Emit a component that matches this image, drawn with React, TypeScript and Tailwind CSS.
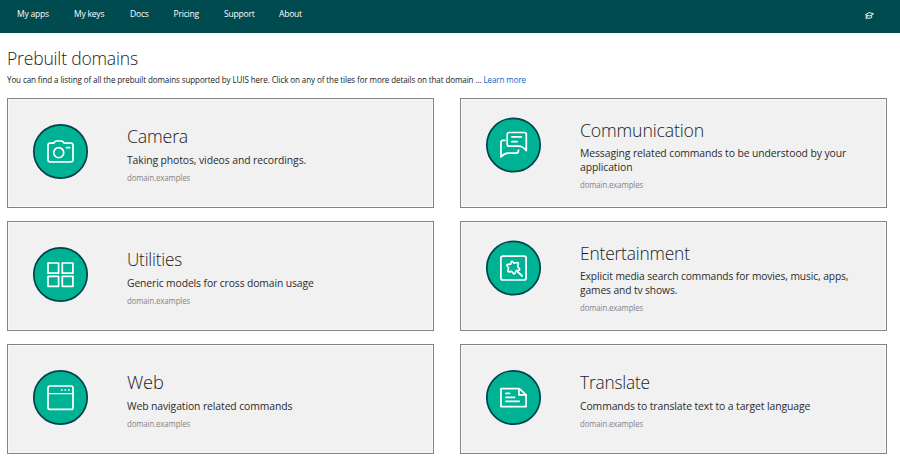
import type { ReactNode } from 'react';

const navItems = [
  { label: 'My apps', box: 'w-[57px]' },
  { label: 'My keys', box: 'w-[56px]' },
  { label: 'Docs', box: 'w-[43.5px]' },
  { label: 'Pricing', box: 'w-[50.5px]' },
  { label: 'Support', box: 'w-[55px]' },
  { label: 'About', box: 'w-[40px]' },
];

type Domain = {
  title: string;
  text: string;
  twoLines?: boolean;
  titleClass: string;
  descClass: string;
  icon: ReactNode;
};

const domains: Domain[] = [
  {
    title: 'Camera',
    text: 'Taking photos, videos and recordings.',
    titleClass: 'scale-x-[0.935]',
    descClass: 'scale-x-[0.943]',
    icon: (
      <>
        <path d="M17 19.2h3.6l2.2-2.2h6.2l2.2 2.2h6.6q2.2 0 2.2 2.2v14q0 2.4-2.2 2.4H17.2q-2.2 0-2.2-2.4v-14q0-2.2 2-2.2z" />
        <circle cx="25.7" cy="28.7" r="5" />
        <path d="M33.5 23.6h3.2" />
      </>
    ),
  },
  {
    title: 'Communication',
    text: 'Messaging related commands to be understood by your\napplication',
    twoLines: true,
    titleClass: 'scale-x-[0.935]',
    descClass: 'scale-x-[0.945]',
    icon: (
      <>
        <path d="M40.3 33.2V17q0-2-2-2H23.2q-2 0-2 2v9.7q0 2 2 2h9.5q4 0 7.6 4.5z" />
        <path d="M25.9 19.4h9.4M25.9 24.2h5.1" />
        <path d="M19 22.8h-1.8q-2.2 0-2.2 2v14.7q3.2-3.8 7-3.8h8q2.5 0 2.5-3" />
      </>
    ),
  },
  {
    title: 'Utilities',
    text: 'Generic models for cross domain usage',
    titleClass: 'scale-x-[0.9]',
    descClass: 'scale-x-[0.938]',
    icon: (
      <>
        <path d="M15 16h10.6v10.2H15zM29.3 16h10.6v10.2H29.3zM15 29.3h10.6v10H15zM29.3 29.3h10.6v10H29.3z" />
      </>
    ),
  },
  {
    title: 'Entertainment',
    text: 'Explicit media search commands for movies, music, apps,\ngames and tv shows.',
    twoLines: true,
    titleClass: 'scale-x-[0.915]',
    descClass: 'scale-x-[0.93]',
    icon: (
      <>
        <rect x="14.9" y="15.7" width="25.2" height="23.8" rx="2" />
        <path
          d="M25.4 21q.8-.5 1.4.4l1.3 1.4 3.2-.8q1.2 0 .9 1.3l-.5 2.7 1.9 2.4q.4 1.1-.9 1.3l-2.4.4-1.4 2.9q-.7.8-1.5-.1l-1.8-2-2.9.5q-1.1-.1-.8-1.2l.7-2.8-1.6-2.3q-.4-1 .8-1.2l2.9-.2z"
          strokeWidth="1.6"
        />
        <path d="M31.4 31l4.8 4.5" strokeWidth="1.8" />
      </>
    ),
  },
  {
    title: 'Web',
    text: 'Web navigation related commands',
    titleClass: 'scale-x-[0.96]',
    descClass: 'scale-x-[0.943]',
    icon: (
      <>
        <rect x="15" y="16" width="25" height="23.4" rx="2" />
        <path d="M15 23.7h25" strokeWidth="1.2" />
        <path d="M28.5 20h.6M32 20h.6M35.5 20h.6" strokeWidth="1.5" />
      </>
    ),
  },
  {
    title: 'Translate',
    text: 'Commands to translate text to a target language',
    titleClass: 'scale-x-[0.91]',
    descClass: 'scale-x-[0.945]',
    icon: (
      <>
        <path d="M15 18.6h18.3l6.8 6.2v11.8H15z" />
        <path d="M33 18.8v6.1h6.8" />
        <path d="M20 23.4h3.6M20 27.4h8.6M20 31.4h13.2" />
      </>
    ),
  },
];

function DomainCard({ domain }: { domain: Domain }) {
  const tall = domain.twoLines;
  return (
    <article className="h-[110px] border border-[#848484] bg-[#f1f1f1] shadow-[inset_0_0_0_1px_#f8f8f8]">
      <div className={`flex pl-[25px] ${tall ? 'pt-[19px]' : 'pt-[25px]'}`}>
        <svg
          viewBox={tall ? '0 0.5 55 55' : '0 0 55 55'}
          className="mr-[39px] h-[55px] w-[55px] shrink-0 overflow-visible"
          fill="none"
          stroke="#fff"
          strokeWidth="1.7"
          strokeLinejoin="round"
          strokeLinecap="round"
        >
          <circle cx="27.5" cy="27.5" r="26.7" fill="#00b294" stroke="#00434a" strokeWidth="1.7" />
          {domain.icon}
        </svg>
        <div className="whitespace-nowrap">
          <h2
            className={`h-[27px] origin-left text-[19px] leading-[25px] font-light tracking-[-0.2px] text-[#1c1c1c] ${domain.titleClass}`}
          >
            {domain.title}
          </h2>
          <p
            className={`origin-left text-[11px] tracking-[-0.1px] whitespace-pre text-[#2b2b2b] ${tall ? 'pt-px leading-[14px]' : 'pt-[2px] pb-px leading-[13px]'} ${domain.descClass}`}
          >
            {domain.text}
          </p>
          <p className="origin-left scale-x-[0.915] pt-[4px] text-[8.5px] leading-[13px] tracking-[-0.1px] text-[#858585]">
            domain.examples
          </p>
        </div>
      </div>
    </article>
  );
}

export default function App() {
  return (
    <div className="h-[464px] w-[900px] overflow-hidden bg-white font-['Open_Sans','Noto_Sans',sans-serif]">
      <header className="flex h-[33px] items-start justify-between bg-[#004b50] pr-[26px] pl-[17px]">
        <nav className="flex pt-[7px] text-[8.5px] leading-[13px] tracking-[-0.2px] whitespace-nowrap text-white">
          {navItems.map((item) => (
            <a key={item.label} className={item.box}>
              {item.label}
            </a>
          ))}
        </nav>
        <svg viewBox="0 0 9 8" className="mt-[12px] h-[8px] w-[9px]" fill="none" stroke="#e8f2ed" strokeWidth="1">
          <path d="M0.5 2.7L4 0.6l4.5 1.1-3.6 2.3zM2 3.6v2.2q2 1.2 4.7-.2V3.1M1.2 3v4.3" />
        </svg>
      </header>
      <main className="pl-[7px]">
        <h1 className="w-max origin-left scale-x-[0.923] pt-[12px] text-[19px] leading-[27px] font-light tracking-[-0.2px] whitespace-nowrap text-[#222]">
          Prebuilt domains
        </h1>
        <p className="h-[26px] w-max origin-left scale-x-[0.944] pt-[1px] text-[8.5px] leading-[13px] tracking-[-0.1px] whitespace-nowrap text-[#222]">
          You can find a listing of all the prebuilt domains supported by LUIS here. Click on any of the tiles for more
          details on that domain ... <a className="text-[#0067d0]">Learn more</a>
        </p>
        <section className="grid w-[880px] grid-cols-2 gap-x-[26px] gap-y-[13px]">
          {domains.map((domain) => (
            <DomainCard key={domain.title} domain={domain} />
          ))}
        </section>
      </main>
    </div>
  );
}
